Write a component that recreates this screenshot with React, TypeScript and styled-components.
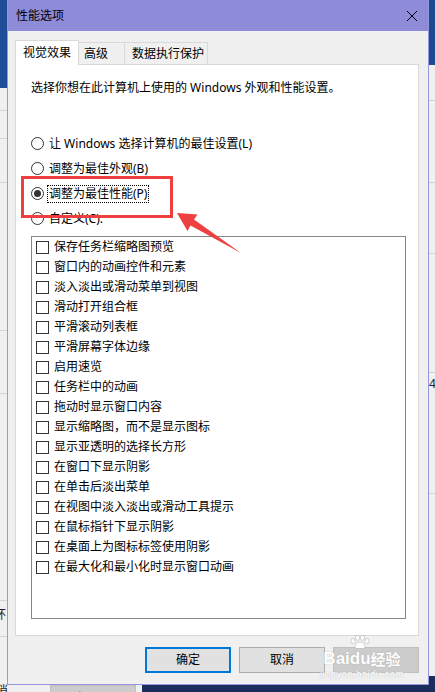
import React from "react";
import styled, { createGlobalStyle } from "styled-components";

const GlobalStyle = createGlobalStyle`
  html, body { margin: 0; padding: 0; background: #f0f0f0; }
  body { font-family: "Noto Sans", "Noto Sans CJK SC", sans-serif; }
  * { box-sizing: border-box; }
`;

const FONT = `"Noto Sans", "Noto Sans CJK SC", sans-serif`;

const Desktop = styled.div`
  position: relative;
  width: 435px;
  height: 692px;
  overflow: hidden;
  background: #f0f0f0;
  font-family: ${FONT};
  font-size: 12px;
  color: #000;
`;

/* ---------- background windows (pieces peeking out) ---------- */
const BackPiece = styled.div<{ $l: number; $t: number; $w: number; $h: number; $bg: string }>`
  position: absolute;
  left: ${(p) => p.$l}px;
  top: ${(p) => p.$t}px;
  width: ${(p) => p.$w}px;
  height: ${(p) => p.$h}px;
  background: ${(p) => p.$bg};
`;

const BackLine = styled.div<{ $l: number; $t: number; $w: number }>`
  position: absolute;
  left: ${(p) => p.$l}px;
  top: ${(p) => p.$t}px;
  width: ${(p) => p.$w}px;
  height: 1px;
  background: #d4d4d4;
`;

const BackText = styled.div<{ $l: number; $t: number; $c?: string }>`
  position: absolute;
  left: ${(p) => p.$l}px;
  top: ${(p) => p.$t}px;
  font-size: 12px;
  line-height: 14px;
  color: ${(p) => p.$c || "#222"};
  white-space: nowrap;
`;

const BackButton = styled.div`
  position: absolute;
  left: 50px;
  top: 685px;
  width: 86px;
  height: 24px;
  background: #cccccc;
  border: 1px solid #bfbfbf;
  color: #838383;
  font-size: 12px;
  display: flex;
  justify-content: center;
  padding-top: 2px;
`;

/* ---------- dialog ---------- */
const Dialog = styled.div`
  position: absolute;
  left: 7px;
  top: 0;
  width: 422px;
  height: 685px;
  border: 1px solid #9896de;
  border-top: none;
  background: #f0f0f0;
  display: flex;
  flex-direction: column;
`;

const TitleBar = styled.div`
  height: 31px;
  background: #8e8bd8;
  display: flex;
  align-items: center;
  justify-content: space-between;
  padding: 0 10px 0 8px;
`;

const Title = styled.span`
  font-size: 12px;
  line-height: 16px;
  color: #000;
`;

const CloseIcon = () => (
  <svg width="12" height="12" viewBox="0 0 12 12" style={{ marginTop: 1 }}>
    <path d="M1 1 L11 11 M11 1 L1 11" stroke="#000" strokeWidth="1" fill="none" />
  </svg>
);

const Body = styled.div`
  flex: 1;
  display: flex;
  flex-direction: column;
  padding: 9px 9px 0 7px;
`;

const TabStrip = styled.div`
  display: flex;
  align-items: flex-end;
  height: 25px;
  margin-bottom: -1px;
`;

const Tab = styled.div<{ $w: number; $pl: number; $active?: boolean }>`
  width: ${(p) => p.$w}px;
  height: ${(p) => (p.$active ? 25 : 22)}px;
  margin-bottom: ${(p) => (p.$active ? 0 : 1)}px;
  padding-left: ${(p) => p.$pl}px;
  background: ${(p) => (p.$active ? "#ffffff" : "#f0f0f0")};
  border: 1px solid #d9d9d9;
  border-bottom: none;
  ${(p) => (p.$active ? "" : "margin-left: -1px;")}
  position: relative;
  z-index: ${(p) => (p.$active ? 2 : 1)};
  display: flex;
  align-items: center;
  font-size: 12px;
  line-height: 16px;
  white-space: nowrap;
`;

const Panel = styled.div`
  height: 572px;
  background: #ffffff;
  border: 1px solid #d9d9d9;
  padding: 15px 12px 0 15px;
  display: flex;
  flex-direction: column;
`;

const Description = styled.div`
  font-size: 12px;
  line-height: 16px;
  height: 16px;
  white-space: nowrap;
  margin-bottom: 35px;
`;

const RadioRow = styled.div`
  height: 25px;
  display: flex;
  align-items: center;
  gap: 4px;
  font-size: 12px;
  line-height: 16px;
  white-space: nowrap;
`;

const RadioCircle = styled.span<{ $checked?: boolean }>`
  width: 13px;
  height: 13px;
  border-radius: 50%;
  border: 1px solid #333;
  background: #fff;
  display: inline-flex;
  align-items: center;
  justify-content: center;
  flex: none;
  &::after {
    content: "";
    width: 7px;
    height: 7px;
    border-radius: 50%;
    background: ${(p) => (p.$checked ? "#333" : "transparent")};
  }
`;

const RadioLabel = styled.span<{ $focus?: boolean }>`
  padding: 0 1px;
  ${(p) => (p.$focus ? "outline: 1px dotted #000; outline-offset: 0px;" : "")}
`;

const ListBox = styled.div`
  margin-top: 5px;
  height: 383px;
  border: 1px solid #828790;
  background: #fff;
  padding: 0 0 0 4px;
  display: flex;
  flex-direction: column;
`;

const CheckRow = styled.div`
  height: 20px;
  display: flex;
  align-items: center;
  gap: 5px;
  font-size: 12px;
  line-height: 16px;
  white-space: nowrap;
`;

const CheckBox = styled.span`
  width: 13px;
  height: 13px;
  border: 1px solid #333;
  background: #fff;
  flex: none;
`;

const ButtonRow = styled.div`
  display: flex;
  justify-content: flex-end;
  gap: 8px;
  padding: 11px 0 0 0;
`;

const Button = styled.div<{ $variant?: "default" | "normal" | "disabled" }>`
  width: 86px;
  height: 26px;
  display: flex;
  align-items: center;
  justify-content: center;
  font-size: 12px;
  line-height: 16px;
  background: ${(p) => (p.$variant === "disabled" ? "#cccccc" : "#e1e1e1")};
  border: ${(p) =>
    p.$variant === "default"
      ? "2px solid #0078d7"
      : p.$variant === "disabled"
      ? "1px solid #bfbfbf"
      : "1px solid #adadad"};
  color: ${(p) => (p.$variant === "disabled" ? "#838383" : "#000")};
`;

/* ---------- annotations ---------- */
const RedBox = styled.div`
  position: absolute;
  left: 21px;
  top: 176px;
  width: 152px;
  height: 42px;
  border: 3px solid #ef3e3e;
`;

const ArrowSvg = styled.svg`
  position: absolute;
  left: 0;
  top: 0;
  pointer-events: none;
`;

const Watermark = styled.div`
  position: absolute;
  left: 316px;
  top: 636px;
  width: 92px;
  color: #ffffff;
  display: flex;
  flex-direction: column;
  align-items: center;
  text-shadow: 0 0 1px rgba(120, 120, 120, 0.55);
`;

const WMTop = styled.div`
  display: flex;
  align-items: flex-end;
  height: 33px;
  font-family: "Liberation Sans", "Noto Sans CJK SC", sans-serif;
  font-weight: bold;
`;

const WMLatin = styled.span`
  font-size: 17px;
  line-height: 20px;
`;

const WMDu = styled.span`
  display: flex;
  flex-direction: column;
  align-items: center;
  font-size: 17px;
  line-height: 20px;
`;

const WMCn = styled.span`
  font-size: 15px;
  line-height: 20px;
  font-family: "Noto Sans CJK SC", sans-serif;
  font-weight: bold;
`;

const WMSub = styled.div`
  font-size: 10px;
  line-height: 11px;
  font-family: "Liberation Sans", sans-serif;
  letter-spacing: 0.2px;
`;

const Paw = () => (
  <svg width="20" height="14" viewBox="0 0 20 14">
    <g fill="#fff" stroke="rgba(120,120,120,0.5)" strokeWidth="0.6">
      <ellipse cx="3" cy="6" rx="2" ry="2.6" />
      <ellipse cx="7.5" cy="2.8" rx="2" ry="2.6" />
      <ellipse cx="12.5" cy="2.8" rx="2" ry="2.6" />
      <ellipse cx="17" cy="6" rx="2" ry="2.6" />
      <path d="M10 7 C7 7 5 10 5 12 C5 14 8 13.5 10 13.5 C12 13.5 15 14 15 12 C15 10 13 7 10 7 Z" />
    </g>
  </svg>
);

const checkItems = [
  "保存任务栏缩略图预览",
  "窗口内的动画控件和元素",
  "淡入淡出或滑动菜单到视图",
  "滑动打开组合框",
  "平滑滚动列表框",
  "平滑屏幕字体边缘",
  "启用速览",
  "任务栏中的动画",
  "拖动时显示窗口内容",
  "显示缩略图，而不是显示图标",
  "显示亚透明的选择长方形",
  "在窗口下显示阴影",
  "在单击后淡出菜单",
  "在视图中淡入淡出或滑动工具提示",
  "在鼠标指针下显示阴影",
  "在桌面上为图标标签使用阴影",
  "在最大化和最小化时显示窗口动画",
];

const radios = [
  { label: "让 Windows 选择计算机的最佳设置(L)", checked: false },
  { label: "调整为最佳外观(B)", checked: false },
  { label: "调整为最佳性能(P)", checked: true },
  { label: "自定义(C):", checked: false },
];

export default function App() {
  return (
    <>
      <GlobalStyle />
      <Desktop>
        {/* background windows */}
        <BackPiece $l={0} $t={0} $w={8} $h={88} $bg="#1e4c97" />
        <BackPiece $l={428} $t={0} $w={7} $h={65} $bg="#1d4a90" />
        <BackPiece $l={142} $t={685} $w={293} $h={7} $bg="#1b2d5c" />
        <BackPiece $l={428} $t={676} $w={7} $h={16} $bg="#1b2d5c" />
        <BackLine $l={0} $t={110} $w={8} />
        <BackLine $l={0} $t={138} $w={8} />
        <BackLine $l={0} $t={182} $w={8} />
        <BackLine $l={0} $t={330} $w={8} />
        <BackLine $l={0} $t={393} $w={8} />
        <BackLine $l={0} $t={600} $w={8} />
        <BackLine $l={0} $t={636} $w={8} />
        <BackLine $l={428} $t={100} $w={7} />
        <BackLine $l={428} $t={182} $w={7} />
        <BackLine $l={428} $t={253} $w={7} />
        <BackLine $l={428} $t={372} $w={7} />
        <BackLine $l={428} $t={493} $w={7} />
        <BackText $l={-6} $t={608}>环</BackText>
        <BackText $l={-4} $t={684}>消</BackText>
        <BackText $l={429} $t={377}>4</BackText>
        <BackButton>应用(A)</BackButton>

        <Dialog>
          <TitleBar>
            <Title>性能选项</Title>
            <CloseIcon />
          </TitleBar>
          <Body>
            <TabStrip>
              <Tab $w={64} $pl={7} $active>
                视觉效果
              </Tab>
              <Tab $w={47} $pl={5}>
                高级
              </Tab>
              <Tab $w={84} $pl={7}>
                数据执行保护
              </Tab>
            </TabStrip>
            <Panel>
              <Description>选择你想在此计算机上使用的 Windows 外观和性能设置。</Description>
              {radios.map((r) => (
                <RadioRow key={r.label}>
                  <RadioCircle $checked={r.checked} />
                  <RadioLabel $focus={r.checked}>{r.label}</RadioLabel>
                </RadioRow>
              ))}
              <ListBox>
                {checkItems.map((t) => (
                  <CheckRow key={t}>
                    <CheckBox />
                    <span>{t}</span>
                  </CheckRow>
                ))}
              </ListBox>
            </Panel>
            <ButtonRow>
              <Button $variant="default">确定</Button>
              <Button $variant="normal">取消</Button>
              <Button $variant="disabled" />
            </ButtonRow>
          </Body>
        </Dialog>

        {/* annotations */}
        <RedBox />
        <ArrowSvg width="435" height="692" viewBox="0 0 435 692">
          <polygon
            points="177,213 197.5,214.5 194,219.5 241,253 190.5,225.5 187.5,231"
            fill="#ee4040"
          />
        </ArrowSvg>
        <Watermark>
          <WMTop>
            <WMLatin>Bai</WMLatin>
            <WMDu>
              <Paw />
              du
            </WMDu>
            <WMCn>经验</WMCn>
          </WMTop>
          <WMSub>jingyan.baidu.com</WMSub>
        </Watermark>
      </Desktop>
    </>
  );
}
